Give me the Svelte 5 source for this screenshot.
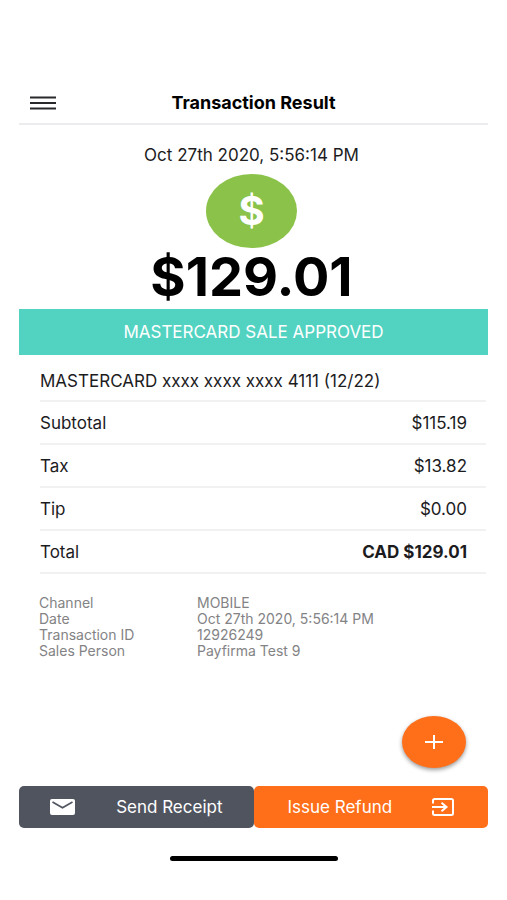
<script>
	const status = 'MASTERCARD SALE APPROVED';
	const date = 'Oct 27th 2020, 5:56:14 PM';
	const card = 'MASTERCARD xxxx xxxx xxxx 4111 (12/22)';

	const lines = [
		{ label: 'Subtotal', value: '$115.19' },
		{ label: 'Tax', value: '$13.82' },
		{ label: 'Tip', value: '$0.00' },
		{ label: 'Total', value: 'CAD $129.01', bold: true }
	];

	const details = [
		{ label: 'Channel', value: 'MOBILE' },
		{ label: 'Date', value: date },
		{ label: 'Transaction ID', value: '12926249' },
		{ label: 'Sales Person', value: 'Payfirma Test 9' }
	];
</script>

<div class="screen">
	<header>
		<button class="menu" aria-label="Menu">
			<svg width="26" height="14" viewBox="0 0 26 14">
				<path d="M0 1.5h26M0 7h26M0 12.5h26" stroke="#29292c" stroke-width="2" />
			</svg>
		</button>
		<h1>Transaction Result</h1>
	</header>

	<main>
		<section class="summary">
			<p class="date">{date}</p>
			<div class="badge">$</div>
			<p class="amount">$129.01</p>
		</section>

		<div class="status">{status}</div>

		<table class="lines">
			<tbody>
				<tr class="card">
					<td colspan="2">{card}</td>
				</tr>
				{#each lines as line}
					<tr>
						<th scope="row">{line.label}</th>
						<td class="value" class:bold={line.bold}>{line.value}</td>
					</tr>
				{/each}
			</tbody>
		</table>

		<dl>
			{#each details as item}
				<dt>{item.label}</dt>
				<dd>{item.value}</dd>
			{/each}
		</dl>
	</main>

	<footer>
		<button class="add" aria-label="Add">
			<svg width="18" height="16" viewBox="0 0 18 16">
				<path d="M9 1v14M0 8h18" stroke="#fff" stroke-width="2" />
			</svg>
		</button>
		<div class="actions">
			<button class="send">
				<svg width="25" height="16" viewBox="0 0 25 16">
					<rect width="25" height="16" rx="2" fill="#fff" />
					<path d="M2.5 3l10 5.8 10-5.8" fill="none" stroke="#50545f" stroke-width="1.6" />
				</svg>
				<span>Send Receipt</span>
			</button>
			<button class="refund">
				<span>Issue Refund</span>
				<svg width="22" height="18" viewBox="0 0 22 18">
					<path d="M1 5.5V2.5Q1 1 2.8 1H19.2Q21 1 21 2.5V15.5Q21 17 19.2 17H2.8Q1 17 1 15.5V12.5" fill="none" stroke="#fff" stroke-width="2" />
					<path d="M0 9h13" stroke="#fff" stroke-width="2" />
					<path d="M9.5 4.8L14.5 9l-5 4.2" fill="none" stroke="#fff" stroke-width="2" />
				</svg>
			</button>
		</div>
		<div class="home"></div>
	</footer>
</div>

<style>
	:global(body) {
		margin: 0;
		background: #fff;
	}
	.screen {
		box-sizing: border-box;
		display: flex;
		flex-direction: column;
		min-height: 100vh;
		padding: 83px 19px 39px;
		font-family: Inter, "Liberation Sans", sans-serif;
		font-size: 17px;
		line-height: 20px;
		color: #1c1c1e;
	}
	button {
		padding: 0;
		border: 0;
		font: inherit;
		cursor: pointer;
	}
	svg {
		display: block;
		flex: none;
	}
	h1, p, dl, dd {
		margin: 0;
	}
	header {
		display: grid;
		grid-template-columns: 48px 1fr 48px;
		align-items: center;
		height: 40px;
		border-bottom: 2px solid #ececee;
	}
	.menu {
		padding: 10px 11px;
		background: none;
	}
	h1 {
		font-size: 18px;
		font-weight: 700;
		text-align: center;
		color: #000;
	}
	.summary {
		display: flex;
		flex-direction: column;
		align-items: center;
		padding: 20px 4px 4px 0;
	}
	.badge {
		display: flex;
		align-items: center;
		justify-content: center;
		width: 91px;
		height: 74px;
		margin-top: 9px;
		border-radius: 50%;
		background: #8bc34a;
		color: #fff;
		font-size: 40px;
		font-weight: 700;
	}
	.amount {
		font-size: 54px;
		font-weight: 700;
		line-height: 57px;
		color: #000;
	}
	.status {
		padding: 13px 0;
		background: #52d3c2;
		color: #fff;
		text-align: center;
	}
	.lines {
		width: calc(100% - 23px);
		margin-left: 21px;
		border-collapse: separate;
		border-spacing: 0;
	}
	th, td {
		height: 41px;
		padding: 0;
		border-bottom: 2px solid #f1f1f2;
		font-weight: 400;
		text-align: left;
	}
	.card td {
		height: 47px;
		padding-top: 6px;
		box-sizing: border-box;
	}
	.value {
		padding-right: 19px;
		text-align: right;
	}
	.bold {
		font-weight: 700;
	}
	dl {
		display: grid;
		grid-template-columns: 158px 1fr;
		padding: 21px 20px;
		font-size: 14px;
		line-height: 16px;
		color: #838385;
	}
	footer {
		display: flex;
		flex-direction: column;
		margin-top: auto;
	}
	.add {
		display: flex;
		align-items: center;
		justify-content: center;
		align-self: flex-end;
		width: 64px;
		height: 52px;
		margin: 0 22px 18px 0;
		border-radius: 50%;
		background: #ff6e19;
		box-shadow: 0 2px 4px rgba(0, 0, 0, 0.4);
	}
	.actions {
		display: grid;
		grid-template-columns: 1fr 1fr;
	}
	.actions button {
		display: flex;
		align-items: center;
		justify-content: space-between;
		height: 42px;
		border-radius: 5px;
		color: #fff;
	}
	.actions .send {
		padding: 0 31px;
		background: #50545f;
	}
	.actions .refund {
		padding: 0 34px;
		background: #ff6e19;
	}
	.home {
		align-self: center;
		width: 168px;
		height: 5px;
		margin-top: 28px;
		border-radius: 3px;
		background: #000;
	}
</style>
